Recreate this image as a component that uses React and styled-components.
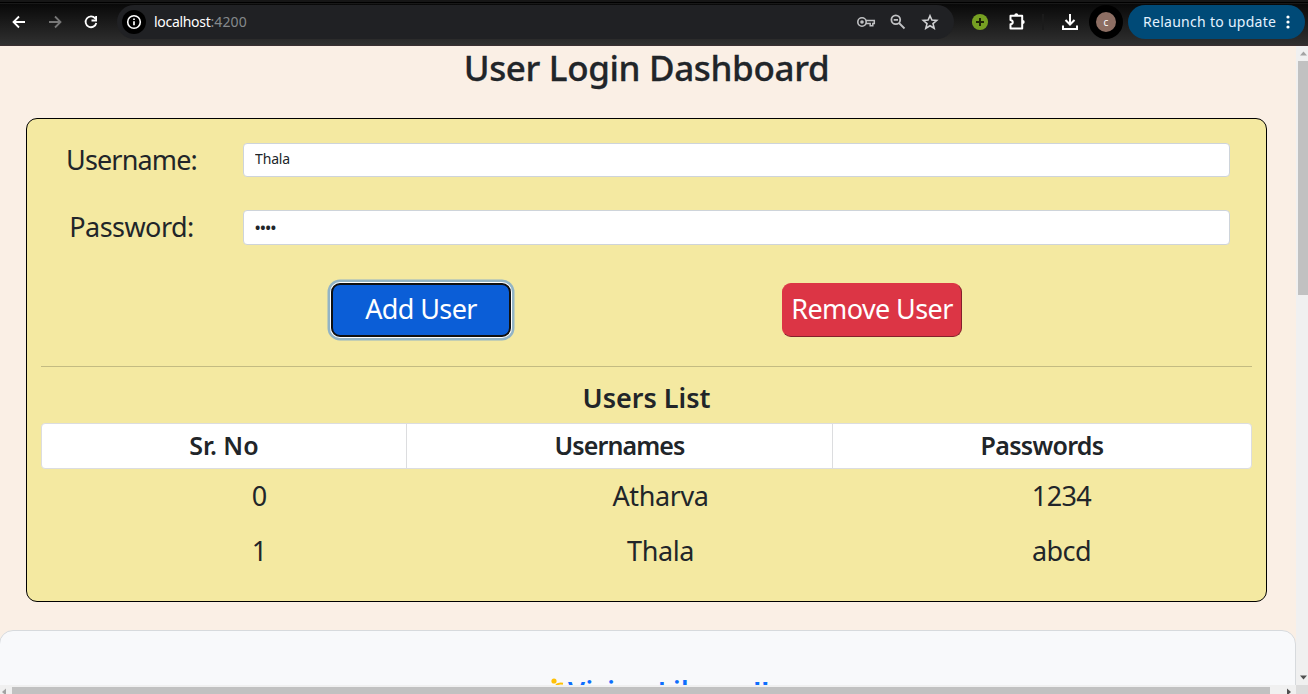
import React from "react";
import styled, { createGlobalStyle } from "styled-components";

const GlobalStyle = createGlobalStyle`
  * { box-sizing: border-box; }
  html, body { margin: 0; overflow: hidden; }
  body { font-family: "Noto Sans", "Open Sans", sans-serif; color: #212529; }
`;

const Window = styled.div`
  display: flex;
  flex-direction: column;
  width: 1308px;
  height: 694px;
  overflow: hidden;
  background: #faefe5;
`;

const BrowserBar = styled.header`
  display: flex;
  align-items: center;
  flex: none;
  height: 46px;
  padding: 5px 3px 7px 7px;
  border-bottom: 1px solid #3a2f31;
  background: linear-gradient(#161616 0 2px, #000 2px 3px, #191919 3px 4px, #090909 4px, #303030 45px);
`;

const NavIcons = styled.div`
  display: flex;
  gap: 12px;
  width: 110px;
`;

const Icon = styled.svg`
  display: block;
  flex: none;
  width: ${(p) => p.$size || 24}px;
  height: ${(p) => p.$size || 24}px;
  fill: none;
  stroke: ${(p) => p.$color || "#fff"};
  stroke-width: 2;
`;

const AddressBar = styled.div`
  display: flex;
  align-items: center;
  width: 837px;
  height: 34px;
  padding: 0 12px 0 5px;
  border-radius: 17px;
  background: #202124;
`;

const SiteInfo = styled.span`
  display: grid;
  place-items: center;
  width: 24px;
  height: 24px;
  border-radius: 50%;
  background: #000;
`;

const Url = styled.span`
  flex: 1;
  padding-left: 8px;
  color: #fff;
  font-size: 14px;
  line-height: 20px;
  letter-spacing: -0.3px;
  span { color: #85898c; letter-spacing: 0.1px; }
`;

const AddressActions = styled.div`
  display: flex;
  align-items: center;
  gap: 8px;
`;

const Extensions = styled.div`
  display: flex;
  align-items: center;
  padding-left: 14px;
  gap: 13px;
`;

const Divider = styled.span`
  width: 2px;
  height: 16px;
  margin-right: 1px;
  background: #1b1b1b;
`;

const Avatar = styled.span`
  display: grid;
  place-items: center;
  width: 34px;
  height: 34px;
  margin-left: 7px;
  border: 7px solid #000;
  border-radius: 50%;
  background: #8d6e63;
  color: #fff;
  font-size: 10px;
  line-height: 20px;
`;

const Relaunch = styled.button`
  display: flex;
  align-items: center;
  justify-content: space-between;
  width: 177px;
  height: 34px;
  margin-left: auto;
  padding: 0 5px 0 15px;
  border: 0;
  border-radius: 17px;
  background: #004a77;
  color: #e4f2ff;
  font: 14px/20px "Noto Sans", sans-serif;
  letter-spacing: 0.28px;
  white-space: nowrap;
`;

const Viewport = styled.div`
  display: grid;
  grid-template-columns: 1296px 12px;
  grid-template-rows: 639px 9px;
  flex: none;
`;

const Page = styled.main`
  display: flex;
  flex-direction: column;
  overflow: hidden;
`;

const Title = styled.h1`
  flex: none;
  margin: 0;
  height: 72px;
  padding-right: 3px;
  text-align: center;
  font-size: 35px;
  font-weight: 500;
  line-height: 44px;
  letter-spacing: -0.35px;
  -webkit-text-stroke: 0.3px #212529;
`;

const Panel = styled.section`
  flex: none;
  width: 1241px;
  height: 484px;
  margin-left: 26px;
  padding: 24px 14px 0;
  border: 1px solid #000;
  border-radius: 11px;
  background: #f4e9a1;
`;

const Field = styled.div`
  display: grid;
  grid-template-columns: 181px 987px;
  column-gap: 21px;
  height: ${(p) => p.$height || 67}px;
`;

const Label = styled.label`
  height: 35px;
  text-align: center;
  font-size: 27px;
  line-height: 34px;
  letter-spacing: ${(p) => p.$tracking || 0}px;
`;

const Input = styled.input`
  width: 987px;
  height: ${(p) => p.$height || 35}px;
  padding: ${(p) => p.$padding || "0 11px 3px"};
  border: 1px solid #ced4da;
  border-radius: 4px;
  background: #fff;
  color: #212529;
  font: ${(p) => p.$weight || 400} 14px "Noto Sans", sans-serif;
  letter-spacing: ${(p) => p.$tracking || 0}px;
`;

const Actions = styled.div`
  display: flex;
  gap: 271px;
  padding-left: 290px;
  height: 83px;
`;

const Button = styled.button`
  width: 180px;
  height: 54px;
  padding: 0 0 2px;
  border: ${(p) => (p.$focused ? "2px solid #101010" : "1px solid #dc3545")};
  border-right-color: ${(p) => (p.$focused ? "#101010" : "#84202b")};
  border-bottom-color: ${(p) => (p.$focused ? "#101010" : "#84202b")};
  border-radius: 9px;
  background: ${(p) => (p.$focused ? "#0b5ed7" : "#dc3545")};
  box-shadow: ${(p) => (p.$focused ? "0 0 0 1px #fff, 0 0 0 3.5px #92b4c5" : "none")};
  color: #fff;
  font: 27px/36px "Noto Sans", sans-serif;
  letter-spacing: ${(p) => p.$tracking || 0}px;
  white-space: nowrap;
`;

const Rule = styled.hr`
  height: 1px;
  margin: 0;
  border: 0;
  background: #c3bb82;
`;

const ListTitle = styled.h2`
  height: 56px;
  margin: 0;
  padding-top: 12px;
  text-align: center;
  font-size: 27px;
  font-weight: 600;
  line-height: 38px;
  letter-spacing: 0;
`;

const HeaderRow = styled.div`
  display: grid;
  grid-template-columns: 364px 426px 1fr;
  height: 46px;
  border: 1px solid #dcdddf;
  border-radius: 4px;
  background: #fff;
`;

const HeaderCell = styled.div`
  text-align: center;
  font-size: 25px;
  font-weight: 600;
  line-height: 43px;
  letter-spacing: ${(p) => p.$tracking || 0}px;
  & + & { border-left: 1px solid #dcdddf; }
`;

const UserRow = styled.div`
  display: grid;
  grid-template-columns: repeat(3, 401px);
  height: 55px;
  padding-left: 18px;
  text-align: center;
  font-size: 27px;
  line-height: 54px;
`;

const Cell = styled.span`
  letter-spacing: ${(p) => p.$tracking || 0}px;
`;

const Card = styled.section`
  flex: none;
  width: 1297px;
  height: 200px;
  margin: 28px 0 0 -1px;
  border: 1px solid #d7dadd;
  border-radius: 14px;
  background: #f8f9fb;
`;

const VisionLink = styled.a`
  display: flex;
  align-items: flex-start;
  padding: 41px 0 0 550px;
  color: #0d6efd;
  font-size: 27px;
  font-weight: 600;
  line-height: 37px;
  letter-spacing: 0.45px;
  white-space: nowrap;
  svg { margin-top: 5px; }
`;

const VScroll = styled.div`
  display: flex;
  flex-direction: column;
  align-items: center;
  padding-left: 2px;
  background: #f0f0f0;
`;

const HScroll = styled.div`
  display: flex;
  align-items: flex-start;
  padding-top: 2px;
  background: #f0f0f0;
`;

const VThumb = styled.div`
  width: 10px;
  height: 234px;
  margin-bottom: auto;
  background: #c1c1c1;
`;

const HThumb = styled.div`
  width: 1258px;
  height: 7px;
  background: #c1c1c1;
`;

const Corner = styled.div`
  background: #dcdcdc;
`;

const users = [
  { id: 0, name: "Atharva", password: "1234" },
  { id: 1, name: "Thala", password: "abcd" },
];

export default function App() {
  return (
    <Window>
      <GlobalStyle />
      <BrowserBar>
        <NavIcons>
          <Icon viewBox="0 0 24 24"><path d="M18 12H7M12 6.5 6.5 12l5.5 5.5" strokeWidth="1.8" /></Icon>
          <Icon viewBox="0 0 24 24" $color="#777"><path d="M6 12h11M12 6.5l5.5 5.5-5.5 5.5" strokeWidth="1.8" /></Icon>
          <Icon viewBox="0 0 24 24"><path d="M16.2 8.4A5.4 5.4 0 1 0 17.3 13M17.1 6v4.5h-4.6" strokeWidth="1.8" /></Icon>
        </NavIcons>
        <AddressBar>
          <SiteInfo>
            <Icon $size={16} viewBox="0 0 16 16">
              <circle cx="8" cy="8" r="6.3" strokeWidth="1.6" />
              <path d="M8 7.2v4M8 4.5v1.6" strokeWidth="1.7" />
            </Icon>
          </SiteInfo>
          <Url>localhost<span>:4200</span></Url>
          <AddressActions>
            <Icon viewBox="0 0 24 24" $color="#c0c1c3">
              <circle cx="8" cy="12" r="4.2" strokeWidth="1.6" />
              <circle cx="8" cy="12" r="1.8" fill="#c0c1c3" stroke="none" />
              <path d="M12 10.6h8.3v2.8h-1.5v2.4h-2.6v-2.4H12" strokeWidth="1.5" />
            </Icon>
            <Icon viewBox="0 0 24 24" $color="#c0c1c3">
              <circle cx="9.8" cy="9.8" r="4.4" strokeWidth="1.8" />
              <path d="M13 13l5.5 5.5M7.7 9.8H12" strokeWidth="1.8" />
            </Icon>
            <Icon viewBox="0 0 24 24" $color="#d0d1d3">
              <path d="m12 5.7 1.9 4.4 4.8.4-3.7 3.1 1.2 4.7-4.2-2.5-4.2 2.5L9 13.6l-3.7-3.1 4.8-.4Z" strokeWidth="1.6" />
            </Icon>
          </AddressActions>
        </AddressBar>
        <Extensions>
          <Icon viewBox="0 0 24 24">
            <circle cx="12" cy="12" r="8.1" fill="#76a022" stroke="none" />
            <path d="M12 8v8M8 12h8" stroke="#1d2506" />
          </Icon>
          <Icon viewBox="0 0 24 24">
            <path d="M5.5 5.8h11.7v12.7H5.5v-4.2c3-.6 3-3.7 0-4.2Z" strokeLinejoin="round" />
            <path d="M9.3 5.2a2 2 0 0 1 4 0ZM17.7 10a2 2 0 0 1 0 4Z" fill="#fff" stroke="none" />
          </Icon>
          <Divider />
          <Icon viewBox="0 0 24 24"><path d="M12 4v10M7.5 10l4.5 4.5 4.5-4.5M5 15.5V19h14v-3.5" /></Icon>
        </Extensions>
        <Avatar>c</Avatar>
        <Relaunch>
          Relaunch to update
          <Icon viewBox="0 0 24 24">
            <g fill="#fff" stroke="none"><circle cx="12" cy="7" r="1.6" /><circle cx="12" cy="12" r="1.6" /><circle cx="12" cy="17" r="1.6" /></g>
          </Icon>
        </Relaunch>
      </BrowserBar>
      <Viewport>
        <Page>
          <Title>User Login Dashboard</Title>
          <Panel>
            <Field>
              <Label $tracking={-0.85} htmlFor="username">Username:</Label>
              <Input id="username" defaultValue="Thala" $height={34} $tracking={-0.15} />
            </Field>
            <Field $height={73}>
              <Label $tracking={-0.55} htmlFor="password">Password:</Label>
              <Input id="password" type="password" defaultValue="abcd" $weight={700} $padding="0 11px 1px" />
            </Field>
            <Actions>
              <Button $focused $tracking={-0.6}>Add User</Button>
              <Button $tracking={-0.6}>Remove User</Button>
            </Actions>
            <Rule />
            <ListTitle>Users List</ListTitle>
            <HeaderRow>
              <HeaderCell>Sr. No</HeaderCell>
              <HeaderCell $tracking={-0.9}>Usernames</HeaderCell>
              <HeaderCell $tracking={-0.7}>Passwords</HeaderCell>
            </HeaderRow>
            {users.map((u) => (
              <UserRow key={u.id}>
                <Cell>{u.id}</Cell>
                <Cell $tracking={-0.4}>{u.name}</Cell>
                <Cell $tracking={-0.6}>{u.password}</Cell>
              </UserRow>
            ))}
          </Panel>
          <Card>
            <VisionLink>
              <Icon $size={18} viewBox="0 0 18 18">
                <circle cx="4" cy="4" r="2.6" fill="#ffc107" stroke="none" />
                <path d="M6 8c2-1.4 4-1.8 7-1.2" stroke="#ffc107" />
              </Icon>
              Vision Library!!
            </VisionLink>
          </Card>
        </Page>
        <VScroll>
          <Icon $size={15} viewBox="0 0 15 15"><path d="M4 9.5 7.5 5.5 11 9.5Z" fill="#a3a3a3" stroke="none" /></Icon>
          <VThumb />
          <Icon $size={15} viewBox="0 0 15 15"><path d="M4 5.5h7L7.5 9.5Z" fill="#505050" stroke="none" /></Icon>
        </VScroll>
        <HScroll>
          <Icon $size={12} viewBox="0 0 12 12"><path d="M6 1.5v7L2 5Z" fill="#a3a3a3" stroke="none" /></Icon>
          <HThumb />
          <Icon $size={26} viewBox="0 0 26 26"><path d="M17 1.5v7L21 5Z" fill="#505050" stroke="none" /></Icon>
        </HScroll>
        <Corner />
      </Viewport>
    </Window>
  );
}
